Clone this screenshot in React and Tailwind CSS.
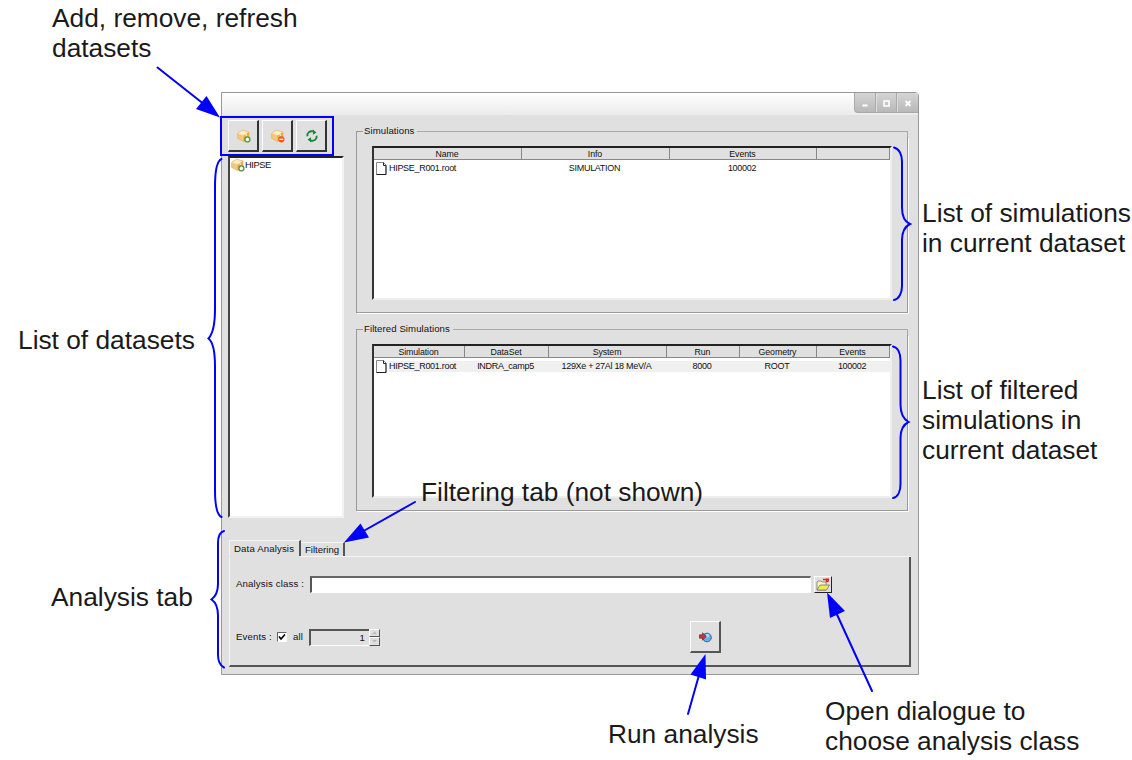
import React from "react";

const fontUi = "font-['Liberation_Sans',Arial,sans-serif]";

function Note({ className, lines }) {
  return (
    <div className={"absolute whitespace-nowrap text-[26.3px] leading-[30px] text-[#1a1a1a] " + className}>
      {lines.map((l) => (
        <div key={l}>{l}</div>
      ))}
    </div>
  );
}

function Box({ children }) {
  return (
    <svg viewBox="0 0 14 14" className="h-[14px] w-[14px] shrink-0">
      <path d="M.6 4.600 5.500 1 12 3v6.500L6.500 12.600.6 9.400z" fill="#f3c878" />
      <path d="M.6 4.600 5.500 1 12 3 6.600 6.600z" fill="#fdeabc" />
      <path d="M6.600 6.600 12 3v6.500L6.500 12.600z" fill="#e9ac4c" />
      <path d="M3 2.900 9.200 5v2.200" stroke="#fff6dc" strokeWidth="1" fill="none" />
      <path d="M.6 4.600 5.500 1 12 3v6.500L6.500 12.600.6 9.400z" fill="none" stroke="#dfa850" strokeWidth=".5" />
      {children}
    </svg>
  );
}

function AddBox() {
  return (
    <Box>
      <circle cx="10.4" cy="10.4" r="2.500" fill="#dcebd0" stroke="#5c9440" strokeWidth="1.300" />
      <path d="M8.900 10.400h3M10.400 8.900v3" stroke="#fff" strokeWidth="1" />
    </Box>
  );
}

function RemoveBox() {
  return (
    <Box>
      <circle cx="10.4" cy="10.3" r="3.100" fill="#ee5a1c" />
      <path d="M8.500 10.300h3.800" stroke="#fff" strokeWidth="1.300" />
    </Box>
  );
}

function Refresh() {
  return (
    <svg viewBox="0 0 14 14" className="h-[14px] w-[14px]">
      <path d="M2.400 7.200C1.800 4.200 4.400 1.600 8 2.300" fill="none" stroke="#15883a" strokeWidth="1.900" />
      <path d="M7.800.4 11.400 3.600 8 5.800z" fill="#15883a" />
      <path d="M11.600 6.800c.6 3-2 5.600-5.600 4.900" fill="none" stroke="#15883a" strokeWidth="1.900" />
      <path d="M6.200 13.600 2.600 10.400 6 8.200z" fill="#15883a" />
    </svg>
  );
}

function ToolButton({ children }) {
  return (
    <div className="flex h-[32px] w-[31px] items-center justify-center border-t border-l border-r-2 border-b-2 border-t-white border-r-[#333] border-b-[#333] border-l-white bg-[#e0e0e0] pt-[1px] pl-[1px]">
      {children}
    </div>
  );
}

function FileIcon() {
  return (
    <svg viewBox="0 0 11 13" className="h-[13px] w-[11px] shrink-0">
      <path d="M.5.5h7l2.500 2.500v9.500H.5z" fill="#fff" stroke="#888" />
      <path d="M7.500.5v3H10V12.500H.5" fill="none" stroke="#222" />
    </svg>
  );
}

function Table({ cols, headers, row, selected }) {
  return (
    <div className="h-[154px] w-[520px] border-t-2 border-r-2 border-b-2 border-l-2 border-t-[#222] border-r-[#eee] border-b-[#eee] border-l-[#333] bg-white">
      <div className={"grid h-[12px] bg-[#e0e0e0] text-[8.8px] leading-[12px] tracking-[-0.1px] " + cols}>
        {headers.map((h, i) => (
          <div key={i} className="h-[12px] border-r border-b border-[#888] pr-[1px] text-center">
            {h}
          </div>
        ))}
      </div>
      <div className={"mt-[2px] grid h-[13px] items-center text-[9px] leading-[12px] tracking-[-0.3px] " + cols}>
        {row.map((c, i) =>
          i === 0 ? (
            <div key={i} className="flex items-center gap-[2px] pl-[2px]">
              <FileIcon />
              <span className={"h-[11px] flex-1 leading-[11px] whitespace-nowrap " + (selected ? "bg-[#f0f0f0]" : "")}>{c}</span>
            </div>
          ) : (
            <div key={i} className={"h-[11px] pr-[3px] text-center leading-[11px] whitespace-nowrap " + (selected ? "bg-[#f0f0f0]" : "")}>
              {c}
            </div>
          )
        )}
      </div>
    </div>
  );
}

function Group({ title, children }) {
  return (
    <div className="h-[188px] w-[552px]">
      <div className="flex h-[12px] items-center">
        <div className="mt-[1px] h-[6px] w-[7px] self-end border-t border-l border-[#999]" />
        <div className="pr-[3px] pl-[1px] text-[9.6px] leading-[12px] tracking-[0.08px] whitespace-nowrap">{title}</div>
        <div className="h-[6px] flex-1 self-end border-t border-r border-[#aaa]" />
      </div>
      <div className="h-[176px] border-r border-b border-l border-[#999] pt-[9px] pl-[15px] shadow-[1px_1px_0_#fff]">
        {children}
      </div>
    </div>
  );
}

function WindowButtons() {
  return (
    <div className="flex h-[20px] w-[64px] overflow-hidden rounded-bl-[4px] border-b border-l border-[#aaa] bg-linear-to-b from-[#d5d5d5] to-[#b8b8b8]">
      <svg viewBox="0 0 63 19" className="h-[19px] w-[63px]">
        <path d="M20.500 0v19M41.500 0v19" stroke="#aaa" />
        <path d="M21.500 0v19M42.500 0v19" stroke="#ddd" />
        <path d="M7.500 12.500h5" stroke="#fff" strokeWidth="1.800" />
        <rect x="29" y="8" width="5" height="5" fill="none" stroke="#fff" strokeWidth="1.600" />
        <path d="m50.500 8 5 5m0-5-5 5" stroke="#fff" strokeWidth="1.800" />
      </svg>
    </div>
  );
}

function Annotations() {
  return (
    <svg viewBox="0 0 1132 760" className="pointer-events-none absolute inset-0 h-[760px] w-[1132px]" fill="none" stroke="#0000ff" strokeWidth="2" strokeLinecap="round">
      <rect x="221" y="117" width="112" height="38" />
      <path d="M157.500 67.500 205 105M415 502l-55 31M688 714l13-46M872 691 834 608" />
      <g fill="#0000ff" stroke="none">
        <path d="M220 117.500 196 109 206.500 96z" />
        <path d="M344 542.500 360.500 523.500 369 537.500z" />
        <path d="M705.500 654 706 679.500 690.500 674.500z" />
        <path d="M827 592.500 845 611 830 618z" />
      </g>
      <path d="M221.500 159c-5 2-6.500 14-6.500 28V309c0 12-1.500 24-6.500 29.500 5 4 6.500 16 6.500 28V490c0 14 2 25 6.500 27" />
      <path d="M224 531c-4 1-6 6-6 12v41c0 8-2 12-6.500 15.500 4.500 3 6.500 8 6.500 16v39c0 7 2 11 6 13" />
      <path d="M894 147.500c5 1 8 7 8 14v46c0 8 2 14 8 16.500-6 3-8 9-8 16v46c0 7-3 13-8 14" />
      <path d="M893 346.500c5 1 7.500 7 7.500 14v44c0 8 2 14 8 17.500-6 3-8 9-8 16v46c0 7-2.500 13-7.500 14" />
    </svg>
  );
}

export default function App() {
  return (
    <div className={"relative h-[760px] w-[1132px] overflow-hidden bg-white pt-[92px] pl-[221px] text-[#111] " + fontUi}>
      <div className="flex h-[583px] w-[698px] flex-col rounded-tr-[4px] border border-[#999] bg-[#e0e0e0]">
        <div className="flex h-[22px] justify-end rounded-tr-[4px] bg-linear-to-b from-white to-[#ebebeb]">
          <WindowButtons />
        </div>
        <div className="flex h-[425px]">
          <div className="w-[134px] pt-[5px] pl-[6px]">
            <div className="flex gap-[3px]">
              <ToolButton><AddBox /></ToolButton>
              <ToolButton><RemoveBox /></ToolButton>
              <ToolButton><Refresh /></ToolButton>
            </div>
            <div className="mt-[4px] h-[362px] w-[116px] border-t-2 border-r-2 border-b-2 border-l-2 border-t-[#222] border-r-[#f2f2f2] border-b-[#f2f2f2] border-l-[#444] bg-white pl-[1px]">
              <div className="flex items-center text-[9.4px] leading-[14px] tracking-[-0.5px]">
                <AddBox />
                <span>HIPSE</span>
              </div>
            </div>
          </div>
          <div className="flex flex-col gap-[10px] pt-[10px]">
            <Group title="Simulations">
              <Table
                cols="grid-cols-[148px_148px_147px_73px]"
                headers={["Name", "Info", "Events", ""]}
                row={["HIPSE_R001.root", "SIMULATION", "100002", ""]}
              />
            </Group>
            <Group title="Filtered Simulations">
              <Table
                selected
                cols="grid-cols-[91px_84px_118px_73px_77px_73px]"
                headers={["Simulation", "DataSet", "System", "Run", "Geometry", "Events"]}
                row={["HIPSE_R001.root", "INDRA_camp5", "129Xe + 27Al 18 MeV/A", "8000", "ROOT", "100002"]}
              />
            </Group>
          </div>
        </div>
        <div className="flex flex-col pl-[7px] text-[9.6px] tracking-[0.15px]">
          <div className="flex h-[16px] items-end">
            <div className="h-[16px] w-[72px] rounded-tl-[2px] border-t border-r-2 border-l border-t-[#f5f5f5] border-r-[#555] border-l-[#f5f5f5] pl-[4px] leading-[15px] whitespace-nowrap">
              Data Analysis
            </div>
            <div className="h-[14px] w-[44px] border-t border-r-2 border-t-[#f5f5f5] border-r-[#555] pl-[4px] leading-[14px] tracking-[0px]">Filtering</div>
          </div>
          <div className="flex">
            <div className="h-px w-[71px]" />
            <div className="h-px w-[611px] bg-[#f5f5f5]" />
          </div>
          <div className="h-[110px] w-[682px] border-r-2 border-b-2 border-l border-r-[#555] border-b-[#555] border-l-[#f5f5f5] pl-[6px]">
            <div className="flex h-[55px] items-center">
              <div className="w-[74px] whitespace-nowrap">Analysis class :</div>
              <div className="h-[17px] w-[501px] border-t-2 border-r border-b border-l-2 border-t-[#666] border-r-[#fff] border-b-[#fff] border-l-[#555] bg-white" />
              <div className="ml-[3px] flex h-[17px] w-[18px] items-center justify-center border-t border-r border-b border-l border-t-white border-r-[#222] border-b-[#222] border-l-white">
                <svg viewBox="0 0 14 13" className="h-[13px] w-[14px]">
                  <path d="M1 12V4l1-1h3l1 1h4v8z" fill="#faf7c0" stroke="#777" strokeWidth=".8" />
                  <path d="M1 12 4 7h9.500l-3 5z" fill="#f2ea45" stroke="#777" strokeWidth=".8" />
                  <path d="M7 1.500h3.500v2H12" fill="none" stroke="#d22" strokeWidth="1.300" />
                  <path d="M9.800.5H13v3.700z" fill="#d22" />
                </svg>
              </div>
            </div>
            <div className="flex h-[50px] items-center">
              <div className="w-[41px]">Events :</div>
              <div className="flex h-[10px] w-[10px] items-center justify-center border border-t-[#666] border-r-white border-b-white border-l-[#666] bg-white">
                <svg viewBox="0 0 8 8" className="h-[8px] w-[8px]">
                  <path d="M1 3.500 3 6 7 1.500" fill="none" stroke="#000" strokeWidth="1.600" />
                </svg>
              </div>
              <div className="ml-[6px] w-[16px]">all</div>
              <div className="h-[17px] w-[60px] border-t-2 border-b border-l-2 border-t-[#555] border-b-white border-l-[#555] pr-[4px] text-right leading-[13px]">1</div>
              <div className="flex h-[17px] w-[11px] flex-col">
                {["M2 5 5 1.500l3 3.500z", "M2 2 5 5.500l3-3.500z"].map((d) => (
                  <div key={d} className="flex-1 border-t border-r border-b border-l border-t-white border-r-[#555] border-b-[#555] border-l-white">
                    <svg viewBox="0 0 10 7" className="block h-[6px] w-[9px]">
                      <path d={d} fill="#bbb" />
                    </svg>
                  </div>
                ))}
              </div>
              <div className="ml-[310px] flex h-[32px] w-[31px] items-center justify-center border-t border-r-2 border-b-2 border-l border-t-white border-r-[#555] border-b-[#555] border-l-white">
                <svg viewBox="0 0 14 12" className="h-[12px] w-[14px]">
                  <circle cx="9" cy="6.500" r="4.300" fill="#63b2ea" stroke="#255b91" strokeWidth=".9" />
                  <circle cx="9.500" cy="4.800" r="1.800" fill="#a8dcfa" />
                  <path d="M1.500 3.800h3V1.800L8.300 5.500 4.500 9.200V7.200h-3z" fill="#bd3937" stroke="#7c2524" strokeWidth=".7" />
                </svg>
              </div>
            </div>
          </div>
        </div>
      </div>
      <Annotations />
      <Note className="top-[3px] left-[52px]" lines={["Add, remove, refresh", "datasets"]} />
      <Note className="top-[325px] left-[18px]" lines={["List of datasets"]} />
      <Note className="top-[582px] left-[51px]" lines={["Analysis tab"]} />
      <Note className="top-[477px] left-[421px]" lines={["Filtering tab (not shown)"]} />
      <Note className="top-[198px] left-[922px]" lines={["List of simulations", "in current dataset"]} />
      <Note className="top-[375px] left-[922px]" lines={["List of filtered", "simulations in", "current dataset"]} />
      <Note className="top-[719px] left-[608px]" lines={["Run analysis"]} />
      <Note className="top-[696px] left-[825px]" lines={["Open dialogue to", "choose analysis class"]} />
    </div>
  );
}
